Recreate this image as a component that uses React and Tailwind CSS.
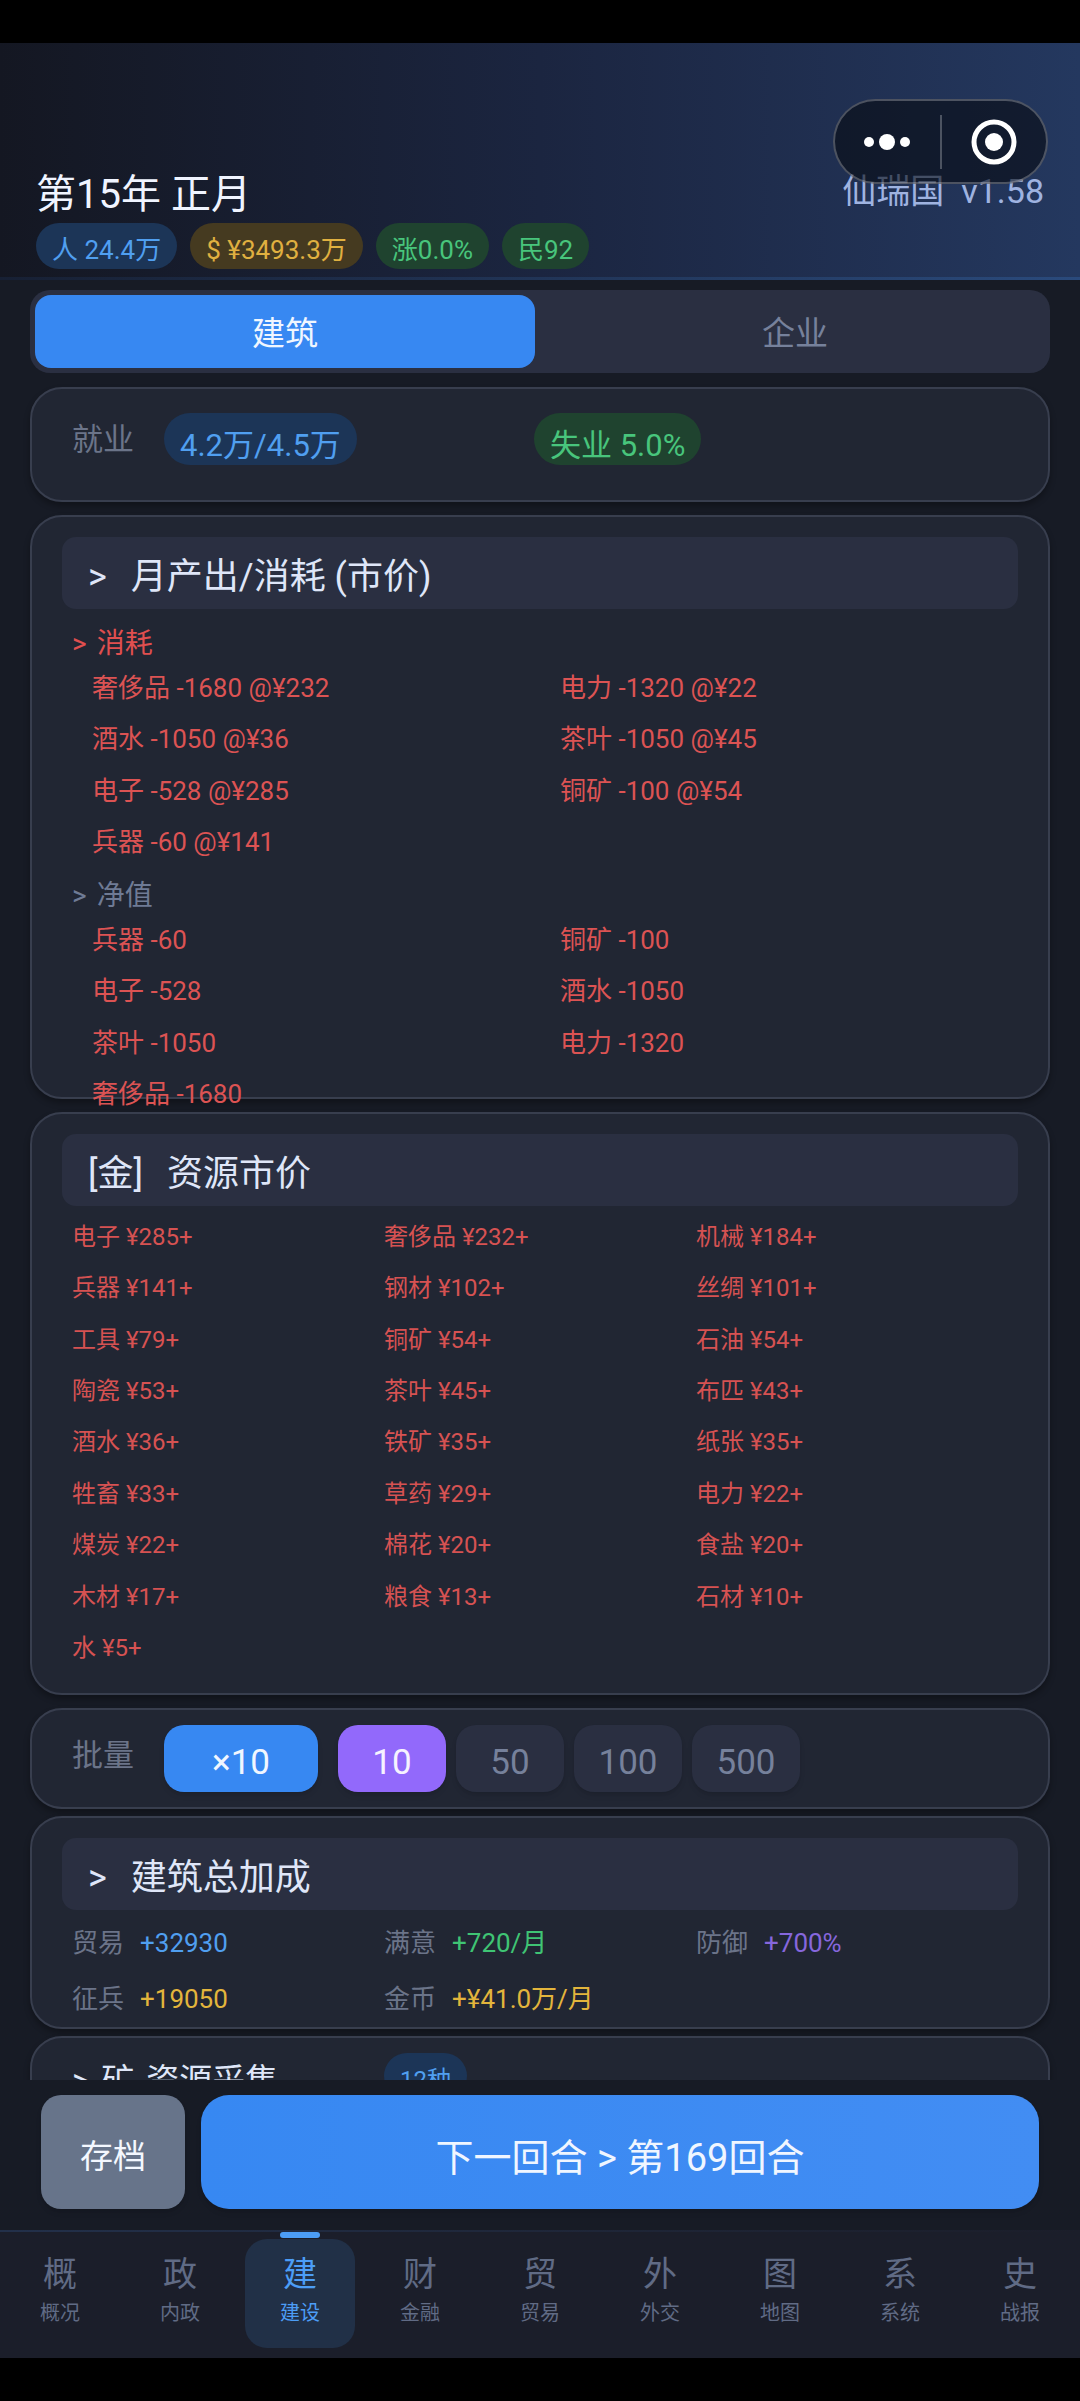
import { useState } from "react";
import clsx from "clsx";

const consumption = [
  "奢侈品 -1680 @¥232",
  "电力 -1320 @¥22",
  "酒水 -1050 @¥36",
  "茶叶 -1050 @¥45",
  "电子 -528 @¥285",
  "铜矿 -100 @¥54",
  "兵器 -60 @¥141",
];

const netValues = [
  "兵器 -60",
  "铜矿 -100",
  "电子 -528",
  "酒水 -1050",
  "茶叶 -1050",
  "电力 -1320",
  "奢侈品 -1680",
];

const prices = [
  ["电子", 285],
  ["奢侈品", 232],
  ["机械", 184],
  ["兵器", 141],
  ["钢材", 102],
  ["丝绸", 101],
  ["工具", 79],
  ["铜矿", 54],
  ["石油", 54],
  ["陶瓷", 53],
  ["茶叶", 45],
  ["布匹", 43],
  ["酒水", 36],
  ["铁矿", 35],
  ["纸张", 35],
  ["牲畜", 33],
  ["草药", 29],
  ["电力", 22],
  ["煤炭", 22],
  ["棉花", 20],
  ["食盐", 20],
  ["木材", 17],
  ["粮食", 13],
  ["石材", 10],
  ["水", 5],
];

const bonuses = [
  { label: "贸易", value: "+32930", color: "text-[#509ff0]" },
  { label: "满意", value: "+720/月", color: "text-[#3fc474]" },
  { label: "防御", value: "+700%", color: "text-[#8667dd]" },
  { label: "征兵", value: "+19050", color: "text-[#e3b53c]" },
  { label: "金币", value: "+¥41.0万/月", color: "text-[#e3b53c]" },
];

const navItems = [
  ["概", "概况"],
  ["政", "内政"],
  ["建", "建设"],
  ["财", "金融"],
  ["贸", "贸易"],
  ["外", "外交"],
  ["图", "地图"],
  ["系", "系统"],
  ["史", "战报"],
];

const pillColors = {
  blue: "bg-[#1c3557] text-[#509ff0]",
  gold: "bg-[#453a20] text-[#e0b040]",
  green: "bg-[#1f432f] text-[#48c57c]",
};

const pillSizes = {
  sm: "h-[46px] pt-2 text-[24px]",
  md: "h-[46px] pt-2 text-[26px]",
  lg: "h-[52px] pt-3 text-[31px]",
};

function Pill({ color, size = "md", children }) {
  return (
    <span
      className={clsx(
        "inline-flex items-center rounded-full px-4 whitespace-pre",
        pillSizes[size],
        pillColors[color]
      )}
    >
      {children}
    </span>
  );
}

function Card({ className, children }) {
  return (
    <section
      className={clsx(
        "flex shrink-0 flex-col rounded-[32px] border-2 border-[#383e4e] bg-[#212633] px-5 shadow-[0_4px_6px_rgba(0,0,0,0.3)]",
        className
      )}
    >
      {children}
    </section>
  );
}

function CardTitle({ mark, children }) {
  return (
    <h2 className="mx-[10px] mt-5 flex h-[72px] items-center gap-6 rounded-[14px] bg-[#2a2f41] px-[26px] pt-2 text-[36px] text-[#dfe6f8]">
      <span>{mark}</span>
      <span>{children}</span>
    </h2>
  );
}

function ResourceGroup({ title, color, items }) {
  return (
    <>
      <h3
        className={clsx(
          "mt-[6px] flex h-10 items-center gap-[10px] px-5 pt-1 text-[28px]",
          color
        )}
      >
        <span>&gt;</span>
        <span>{title}</span>
      </h3>
      <ul className="ml-10 grid h-[206px] grid-cols-2 grid-rows-4 items-center text-[26px] text-[#dc5353]">
        {items.map((item) => (
          <li key={item}>{item}</li>
        ))}
      </ul>
    </>
  );
}

function Header() {
  return (
    <header className="relative flex h-[237px] shrink-0 flex-col justify-end bg-linear-to-r from-[#141722] via-[#1b2540] to-[#24385f] px-9">
      <div className="flex items-center justify-between">
        <h1 className="text-[40px] leading-[56px] text-[#f0f4ff]">
          第15年 正月
        </h1>
        <p className="pb-2 text-[34px] leading-[48px] whitespace-pre text-[#9fb3e0]">
          仙瑞国{"  "}v1.58
        </p>
      </div>
      <div className="mb-2 flex gap-[13px]">
        <Pill color="blue">人 24.4万</Pill>
        <Pill color="gold">$ ¥3493.3万</Pill>
        <Pill color="green">涨0.0%</Pill>
        <Pill color="green">民92</Pill>
      </div>
      <div className="-mx-9 h-[3px] bg-linear-to-r from-[#172034] to-[#2a4a7c]" />

      {/* mini program capsule floats over the header */}
      <div className="absolute top-14 right-8 flex h-[85px] w-[215px] items-center rounded-full border-2 border-white/25 bg-[#060a10]/60">
        <button className="flex flex-1 justify-center" aria-label="更多">
          <svg width="46" height="18" viewBox="0 0 46 18" fill="#fff">
            <circle cx="5" cy="9" r="5" />
            <circle cx="23" cy="9" r="8" />
            <circle cx="41" cy="9" r="5" />
          </svg>
        </button>
        <div className="h-[54px] w-[2px] bg-white/25" />
        <button className="flex flex-1 justify-center" aria-label="关闭">
          <svg width="46" height="46" viewBox="0 0 46 46">
            <circle cx="23" cy="23" r="20" fill="none" stroke="#fff" strokeWidth="5" />
            <circle cx="23" cy="23" r="9" fill="#fff" />
          </svg>
        </button>
      </div>
    </header>
  );
}

export default function App() {
  const [tab, setTab] = useState("建筑");
  const [batch, setBatch] = useState(10);
  const [page, setPage] = useState("建");

  return (
    <div className="flex h-screen flex-col bg-black py-[43px] font-[Roboto,'Noto_Sans_CJK_SC',sans-serif] leading-none">
      <Header />

      <main className="flex min-h-0 flex-1 flex-col overflow-y-auto bg-[#171b25] px-[30px] pt-[10px] [scrollbar-width:none]">
        <div className="mb-[14px] flex shrink-0 gap-[10px] rounded-[20px] bg-[#2a2f41] p-[5px]">
          {["建筑", "企业"].map((name) => (
            <button
              key={name}
              onClick={() => setTab(name)}
              className={clsx(
                "h-[73px] flex-1 rounded-2xl pt-1 text-[33px]",
                tab === name ? "bg-[#3788f2] text-[#f0f6ff]" : "text-[#76819b]"
              )}
            >
              {name}
            </button>
          ))}
        </div>

        <Card className="mb-[13px] pt-6 pb-[35px]">
          <div className="grid grid-cols-[92px_370px_1fr] px-5">
            <span className="flex h-[52px] items-center text-[31px] text-[#6b7489]">
              就业
            </span>
            <div>
              <Pill color="blue" size="lg">
                4.2万/4.5万
              </Pill>
            </div>
            <div>
              <Pill color="green" size="lg">
                失业 5.0%
              </Pill>
            </div>
          </div>
        </Card>

        <Card className="mb-[13px]">
          <CardTitle mark=">">月产出/消耗 (市价)</CardTitle>
          <div className="mt-[7px] -mb-[23px] flex flex-col">
            <ResourceGroup title="消耗" color="text-[#e04f4f]" items={consumption} />
            <ResourceGroup title="净值" color="text-[#6f7b95]" items={netValues} />
          </div>
        </Card>

        <Card className="mb-[13px] pb-[19px]">
          <CardTitle mark="[金]">资源市价</CardTitle>
          <ul className="mx-5 mt-[5px] grid h-[463px] grid-cols-3 grid-rows-9 items-center text-[24px] text-[#d65252]">
            {prices.map(([name, price]) => (
              <li key={name}>
                {name} ¥{price}+
              </li>
            ))}
          </ul>
        </Card>

        <Card className="mb-[7px] py-[15px]">
          <div className="flex gap-[10px] px-5">
            <span className="flex h-[60px] w-[82px] items-center text-[31px] text-[#6b7489]">
              批量
            </span>
            <button className="mr-[10px] h-[67px] w-[154px] rounded-[20px] bg-[#3788f2] pt-2 text-[35px] text-[#f0f6ff] shadow-md">
              ×{batch}
            </button>
            {[10, 50, 100, 500].map((n) => (
              <button
                key={n}
                onClick={() => setBatch(n)}
                className={clsx(
                  "h-[67px] w-[108px] rounded-[20px] pt-2 text-[35px] shadow-md",
                  batch === n
                    ? "bg-[#9269fb] text-[#f6f2ff]"
                    : "bg-[#2a2f41] text-[#76819b]"
                )}
              >
                {n}
              </button>
            ))}
          </div>
        </Card>

        <Card className="mb-[7px]">
          <CardTitle mark=">">建筑总加成</CardTitle>
          <dl className="mx-5 mt-[5px] grid grid-cols-3 text-[26px]">
            {bonuses.map(({ label, value, color }) => (
              <div key={label} className="flex h-14 items-center gap-4">
                <dt className="text-[#6b7489]">{label}</dt>
                <dd className={color}>{value}</dd>
              </div>
            ))}
          </dl>
        </Card>

        <Card className="pt-[15px] pb-6">
          <div className="grid grid-cols-3 px-5">
            <h2 className="flex items-center gap-3 pt-2 text-[33px] text-[#dfe6f8]">
              <span>&gt;</span>
              <span>矿</span>
              <span>资源采集</span>
            </h2>
            <div>
              <Pill color="blue" size="sm">
                12种
              </Pill>
            </div>
          </div>
        </Card>
      </main>

      <div className="flex shrink-0 gap-4 bg-[#171b25] px-[41px] pt-[15px] pb-[21px]">
        <button className="h-[114px] w-36 rounded-[20px] bg-[#67748a] pt-2 text-[33px] text-[#f4f8ff] shadow-md">
          存档
        </button>
        <button className="h-[114px] flex-1 rounded-[28px] bg-linear-to-r from-[#3788f2] to-[#428df3] pt-3 text-[38px] text-[#f0f6ff] shadow-md">
          下一回合 &gt; 第169回合
        </button>
      </div>

      <nav className="shrink-0 bg-[#1b1e2a]">
        <div className="h-[2px] bg-linear-to-r from-[#22304a] to-[#1b1e2a]" />
        <div className="flex">
          {navItems.map(([icon, label]) => (
            <button
              key={icon}
              onClick={() => setPage(icon)}
              className={clsx(
                "flex flex-1 flex-col items-center pb-[10px]",
                page === icon ? "text-[#4c9df6]" : "text-[#606b85]"
              )}
            >
              <span
                className={clsx(
                  "h-[6px] w-10 rounded-full",
                  page === icon && "bg-[#4c9df6]"
                )}
              />
              <span
                className={clsx(
                  "mt-px flex h-[109px] w-[110px] flex-col items-center gap-3 rounded-[22px] pt-[18px]",
                  page === icon && "bg-[#213047]"
                )}
              >
                <span className="text-[34px]">{icon}</span>
                <span className="text-[20px]">{label}</span>
              </span>
            </button>
          ))}
        </div>
      </nav>
    </div>
  );
}
